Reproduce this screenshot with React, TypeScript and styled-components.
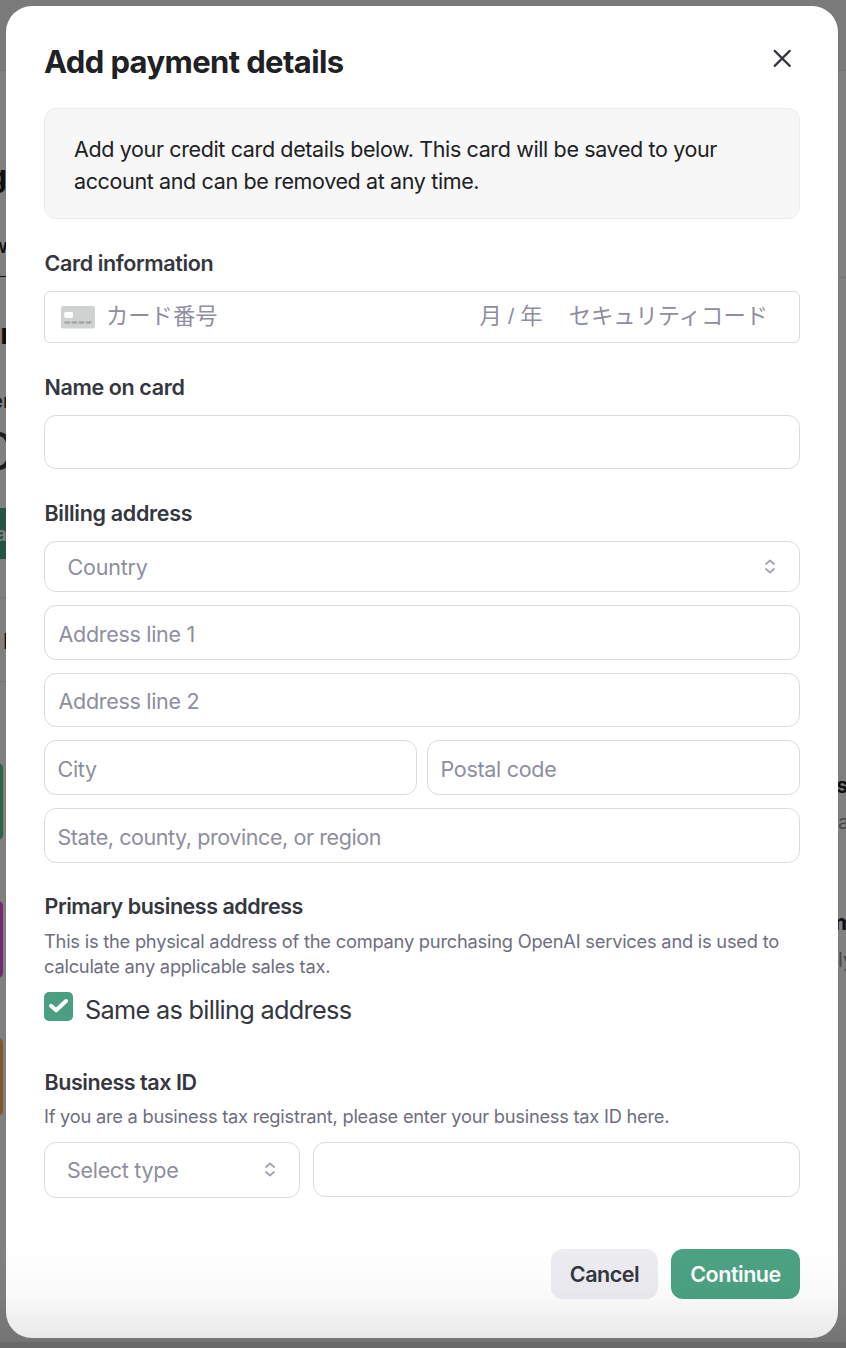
import React from "react";
import styled, { createGlobalStyle } from "styled-components";

const GlobalStyle = createGlobalStyle`
  * { box-sizing: border-box; }
  html, body { margin: 0; padding: 0; }
  body {
    background: #808080;
    font-family: Inter, "Noto Sans CJK JP", "Liberation Sans", sans-serif;
    overflow: hidden;
  }
  input, button { font-family: inherit; }
`;

const Screen = styled.div`
  position: relative;
  width: 846px;
  height: 1348px;
  padding: 6px 8px 10px 6px;
  background: #808080;
  overflow: hidden;
`;

const Backdrop = styled.div`
  position: absolute;
  inset: 0;
`;

const TopBar = styled.div`
  height: 71px;
  background: #7a7a7a;
  border-bottom: 1px solid #747474;
`;

const Fragment = styled.span<{ $right: number; $y: number; $size: number; $weight?: number; $color?: string }>`
  position: absolute;
  right: ${(p) => p.$right}px;
  top: ${(p) => p.$y}px;
  height: 40px;
  line-height: 40px;
  margin-top: -20px;
  font-size: ${(p) => p.$size}px;
  font-weight: ${(p) => p.$weight ?? 600};
  color: ${(p) => p.$color ?? "#101011"};
  white-space: nowrap;
`;

const FragmentRight = styled(Fragment)`
  right: auto;
  left: ${(p) => p.$right}px;
`;

const Rule = styled.div<{ $y: number; $color: string; $left?: number }>`
  position: absolute;
  top: ${(p) => p.$y}px;
  left: ${(p) => p.$left ?? 0}px;
  width: ${(p) => (p.$left ? 8 : 6)}px;
  height: 1px;
  background: ${(p) => p.$color};
`;

const Tile = styled.div<{ $y: number; $h: number; $w: number; $color: string; $r?: number }>`
  position: absolute;
  top: ${(p) => p.$y}px;
  left: -40px;
  width: ${(p) => p.$w + 40}px;
  height: ${(p) => p.$h}px;
  border-radius: ${(p) => p.$r ?? 0}px;
  background: ${(p) => p.$color};
`;

const Dialog = styled.main`
  position: relative;
  display: flex;
  flex-direction: column;
  width: 832px;
  height: 1332px;
  padding: 34px 38px 39px;
  border-radius: 26px;
  background: #fff;
`;

const Header = styled.header`
  display: flex;
  justify-content: space-between;
  height: 68px;
`;

const Title = styled.h1`
  margin: 0;
  height: 44px;
  line-height: 44px;
  font-size: 31px;
  font-weight: 650;
  letter-spacing: -0.62px;
  color: #202123;
  white-space: nowrap;
`;

const CloseButton = styled.button`
  width: 36px;
  height: 36px;
  padding: 0;
  border: 0;
  background: none;
  svg { display: block; }
`;

const Notice = styled.p`
  margin: 0 0 28px;
  height: 111px;
  padding: 24px 29px;
  border: 1px solid #ececec;
  border-radius: 12px;
  background: #f7f7f7;
  font-size: 21.5px;
  line-height: 32px;
  letter-spacing: -0.37px;
  color: #202123;
  white-space: nowrap;
`;

const Section = styled.section<{ $gap: number }>`
  display: flex;
  flex-direction: column;
  margin-bottom: ${(p) => p.$gap}px;
`;

const Label = styled.h2<{ $after?: number; $ls?: number }>`
  margin: 0 0 ${(p) => p.$after ?? 12}px;
  height: 32px;
  line-height: 32px;
  padding-left: 0.5px;
  font-size: 21.5px;
  font-weight: 560;
  letter-spacing: ${(p) => p.$ls ?? -0.37}px;
  color: #353740;
`;

const Help = styled.p<{ $ls?: number }>`
  margin: 0;
  font-size: 18.3px;
  line-height: 25px;
  letter-spacing: ${(p) => p.$ls ?? -0.23}px;
  color: #6e6e80;
  white-space: nowrap;
`;

const Field = styled.div<{ $h: number; $w?: number; $pad?: number; $ls?: number; $top?: number }>`
  display: flex;
  align-items: center;
  justify-content: space-between;
  flex: ${(p) => (p.$w ? `0 0 ${p.$w}px` : "0 0 auto")};
  height: ${(p) => p.$h}px;
  padding: ${(p) => p.$top ?? 3}px 22px 0 ${(p) => p.$pad ?? 13.5}px;
  border: 1px solid #d9d9e3;
  border-radius: 12px;
  background: #fff;
  font-size: 21.5px;
  letter-spacing: ${(p) => p.$ls ?? -0.3}px;
  color: #8e8ea0;
  white-space: nowrap;
`;

const Stack = styled.div`
  display: flex;
  flex-direction: column;
  gap: 13px;
`;

const Row = styled.div<{ $gap: number; $before?: number }>`
  display: flex;
  gap: ${(p) => p.$gap}px;
  margin-top: ${(p) => p.$before ?? 0}px;
`;

const CardField = styled.div`
  display: flex;
  align-items: center;
  height: 52px;
  padding: 0 31px 6px 16px;
  border: 1px solid #d9d9e3;
  border-radius: 6px;
  font-family: "Liberation Sans", "Noto Sans CJK JP", sans-serif;
  font-size: 22.3px;
  color: #8e8ea0;
  white-space: nowrap;
`;

const CardGlyph = styled.svg`
  margin: 6px 11px 0 0;
`;

const Expiry = styled.span`
  margin-left: auto;
  margin-right: 26px;
`;

const CheckRow = styled.label`
  display: flex;
  align-items: flex-start;
  gap: 12px;
  height: 36px;
  margin-top: 13px;
`;

const CheckBox = styled.span`
  display: block;
  width: 29px;
  height: 29px;
  border-radius: 5px;
  background: #4b9f80;
  svg { display: block; }
`;

const CheckText = styled.span`
  line-height: 36px;
  font-size: 25.3px;
  letter-spacing: -0.7px;
  color: #353740;
`;

const Footer = styled.footer`
  display: flex;
  justify-content: flex-end;
  gap: 13px;
  margin-top: auto;
`;

const Button = styled.button<{ $primary?: boolean }>`
  width: ${(p) => (p.$primary ? 129 : 107)}px;
  height: 50px;
  padding: 0;
  border: 0;
  border-radius: 12px;
  background: ${(p) => (p.$primary ? "#4ba283" : "#ececf1")};
  color: ${(p) => (p.$primary ? "#fff" : "#353740")};
  font-size: 21.5px;
  font-weight: 560;
  letter-spacing: -0.48px;
`;

const BottomShade = styled.div`
  position: absolute;
  left: 0;
  right: 0;
  bottom: 0;
  height: 100px;
  background: linear-gradient(to bottom, rgba(0, 0, 0, 0), rgba(0, 0, 0, 0.02) 45%, rgba(0, 0, 0, 0.1));
  pointer-events: none;
`;

const BottomEdge = styled.div`
  position: absolute;
  left: 0;
  right: 0;
  bottom: 0;
  height: 6px;
  background: #696969;
`;

const Chevrons = () => (
  <svg width="14" height="18" viewBox="0 0 14 18" fill="none" stroke="#a3a3b5" strokeWidth="1.8" strokeLinecap="round" strokeLinejoin="round">
    <path d="M3 6L7 2.5L11 6M3 11L7 14.5L11 11" />
  </svg>
);

export default function App() {
  return (
    <>
      <GlobalStyle />
      <Screen>
        <Backdrop aria-hidden>
          <TopBar />
          <Fragment $right={839} $y={176} $size={30} $weight={700}>g</Fragment>
          <Fragment $right={838} $y={246} $size={20}>w</Fragment>
          <Rule $y={276} $color="#101011" />
          <Rule $y={277} $color="#747474" $left={838} />
          <Fragment $right={834} $y={334} $size={29} $weight={700}>r</Fragment>
          <Fragment $right={831} $y={401} $size={20} $weight={500} $color="#1b1c20">en</Fragment>
          <Fragment $right={831} $y={452} $size={52} $weight={400} $color="#1b1c20">0</Fragment>
          <Tile $y={508} $h={51} $w={6} $color="#265343" />
          <Fragment $right={839} $y={534} $size={20} $color="#808080">a</Fragment>
          <Rule $y={597} $color="#757575" />
          <Fragment $right={826} $y={641} $size={22} $weight={700}>N</Fragment>
          <Rule $y={681} $color="#757575" />
          <Tile $y={763} $h={77} $w={3} $r={5} $color="#2b6548" />
          <Tile $y={901} $h={77} $w={3} $r={5} $color="#6f2b6c" />
          <Tile $y={1038} $h={78} $w={3} $r={5} $color="#80592b" />
          <FragmentRight $right={836} $y={785} $size={22} $weight={700}>s</FragmentRight>
          <FragmentRight $right={838} $y={822} $size={20} $weight={400} $color="#47474f">a</FragmentRight>
          <FragmentRight $right={834} $y={922} $size={22} $weight={700}>m</FragmentRight>
          <FragmentRight $right={838} $y={960} $size={20} $weight={400} $color="#47474f">ly</FragmentRight>
        </Backdrop>
        <Dialog>
          <Header>
            <Title>Add payment details</Title>
            <CloseButton aria-label="Close">
              <svg width="36" height="36" viewBox="0 0 36 36" fill="none" stroke="#353740" strokeWidth="2.2" strokeLinecap="round">
                <path d="M10.7 10.9L25.7 25.9M25.7 10.9L10.7 25.9" />
              </svg>
            </CloseButton>
          </Header>
          <Notice>
            Add your credit card details below. This card will be saved to your
            <br />
            account and can be removed at any time.
          </Notice>
          <Section $gap={28}>
            <Label>Card information</Label>
            <CardField>
              <CardGlyph width="34" height="23" viewBox="0 0 34 23">
                <rect width="34" height="22.5" rx="2.5" fill="#d0d2d1" />
                <rect x="3.3" y="6" width="8.6" height="6" rx="1.4" fill="#fff" />
                <path d="M3.5 16.5H30.5" stroke="#a5a8a7" strokeWidth="2.6" strokeDasharray="5.6 1.5" />
              </CardGlyph>
              <span>カード番号</span>
              <Expiry>月 / 年</Expiry>
              <span>セキュリティコード</span>
            </CardField>
          </Section>
          <Section $gap={28}>
            <Label>Name on card</Label>
            <Field $h={54} />
          </Section>
          <Section $gap={27}>
            <Label $ls={-0.3}>Billing address</Label>
            <Stack>
              <Field $h={51} $pad={22.5} $top={0} $ls={-0.2}>Country<Chevrons /></Field>
              <Field $h={55}>Address line 1</Field>
              <Field $h={54} $top={2}>Address line 2</Field>
              <Row $gap={10}>
                <Field $h={55} $w={373} $pad={12.5}>City</Field>
                <Field $h={55} $w={373} $pad={12.5}>Postal code</Field>
              </Row>
              <Field $h={55} $pad={12.5} $ls={-0.42}>State, county, province, or region</Field>
            </Stack>
          </Section>
          <Section $gap={38}>
            <Label $after={7} $ls={-0.46}>Primary business address</Label>
            <Help>
              This is the physical address of the company purchasing OpenAI services and is used to
              <br />
              calculate any applicable sales tax.
            </Help>
            <CheckRow>
              <CheckBox>
                <svg width="29" height="29" viewBox="0 0 29 29" fill="none" stroke="#fff" strokeWidth="4" strokeLinecap="round" strokeLinejoin="round">
                  <path d="M7 13.8L12.2 18.3L22 9" />
                </svg>
              </CheckBox>
              <CheckText>Same as billing address</CheckText>
            </CheckRow>
          </Section>
          <Section $gap={0}>
            <Label $after={6} $ls={-0.46}>Business tax ID</Label>
            <Help $ls={-0.25}>If you are a business tax registrant, please enter your business tax ID here.</Help>
            <Row $gap={13} $before={13}>
              <Field $h={56} $w={256} $pad={22} $top={0}>Select type<Chevrons /></Field>
              <Field $h={55} $w={487} />
            </Row>
          </Section>
          <Footer>
            <Button>Cancel</Button>
            <Button $primary>Continue</Button>
          </Footer>
        </Dialog>
        <BottomShade />
        <BottomEdge />
      </Screen>
    </>
  );
}
